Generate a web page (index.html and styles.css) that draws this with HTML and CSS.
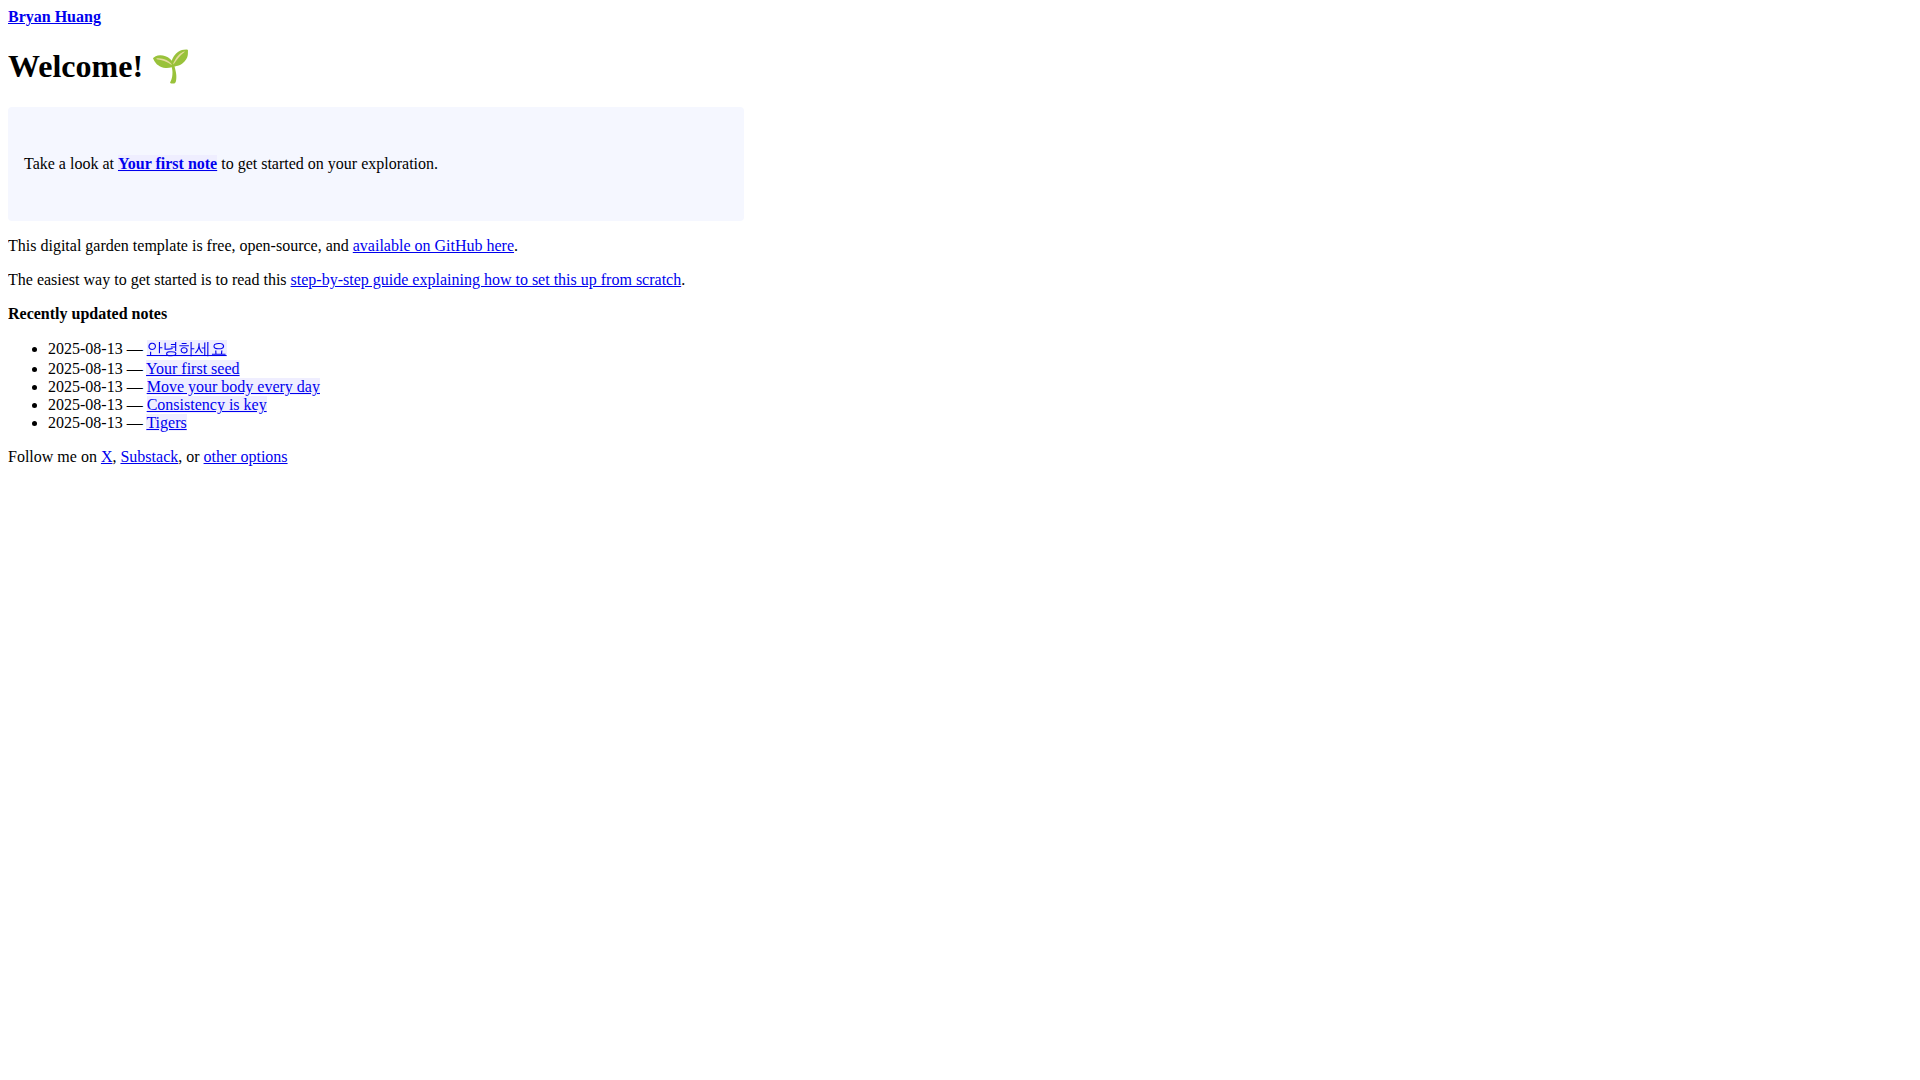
FILE: index.html
```
<!DOCTYPE html>
<html lang="en">
<head>
    <meta charset="UTF-8">
    <meta name="viewport" content="width=device-width, initial-scale=1.0">
    <title>Welcome!</title>
    <link rel="stylesheet" href="styles.css">
</head>
<body>

    <nav>
        <a class="site-title" href="index.html"><b>Bryan Huang</b></a>
    </nav>

    <main>
        <h1>Welcome! 🌱</h1>

        <p class="callout">
            Take a look at <a class="internal-link" href="#your-first-note"><b>Your first note</b></a> to get started on your exploration.
        </p>

        <p>This digital garden template is free, open-source, and <a href="#github">available on GitHub here</a>.</p>

        <p>The easiest way to get started is to read this <a href="#guide">step-by-step guide explaining how to set this up from scratch</a>.</p>

        <p><strong>Recently updated notes</strong></p>

        <ul>
            <li>2025-08-13 — <a class="internal-link" href="#hello">안녕하세요</a></li>
            <li>2025-08-13 — <a class="internal-link" href="#your-first-seed">Your first seed</a></li>
            <li>2025-08-13 — <a class="internal-link" href="#move">Move your body every day</a></li>
            <li>2025-08-13 — <a class="internal-link" href="#consistency">Consistency is key</a></li>
            <li>2025-08-13 — <a class="internal-link" href="#tigers">Tigers</a></li>
        </ul>
    </main>

    <footer>
        Follow me on <a href="#x">X</a>, <a href="#substack">Substack</a>, or <a href="#other">other options</a>
    </footer>

</body>
</html>
```
FILE: styles.css
```
body {
    font-family: "Liberation Serif", "WenQuanYi Zen Hei", "Noto Sans CJK KR", serif;
    margin: 8px;
    background-color: #fff;
    color: #000;
}

main {
    max-width: 736px;
}

.callout {
    padding: 48px 16px;
    background: #f5f7ff;
    border-radius: 4px;
}

.internal-link {
    background: #efeeff;
}
```
